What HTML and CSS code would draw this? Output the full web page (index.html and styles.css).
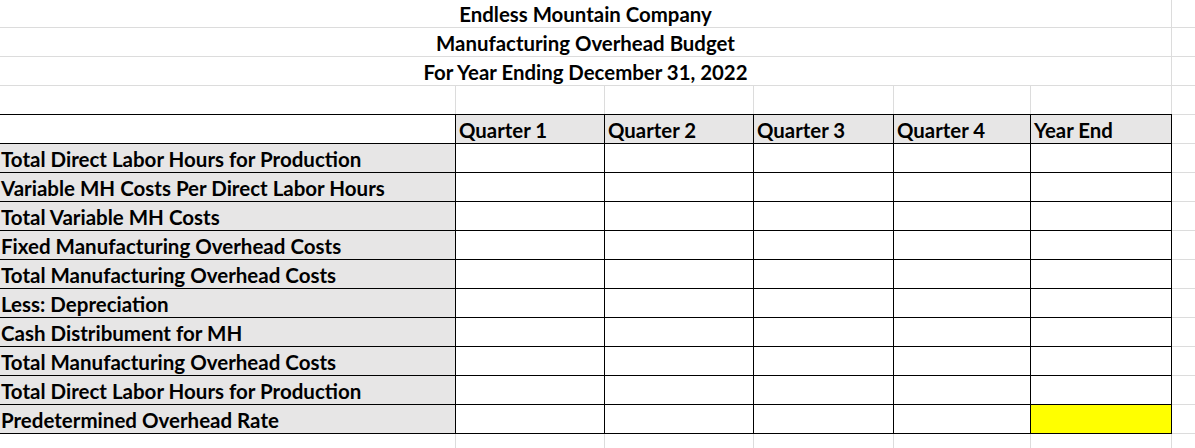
FILE: index.html
```html
<!DOCTYPE html>
<html>
<head>
<meta charset="utf-8">
<link rel="stylesheet" href="styles.css">
</head>
<body>
<div class="sheet">
  <div class="title">Endless Mountain Company</div><div class="c"></div>
  <div class="title">Manufacturing Overhead Budget</div><div class="c"></div>
  <div class="title">For Year Ending December 31, 2022</div><div class="c"></div>
  <div class="c"></div><div class="c"></div><div class="c"></div><div class="c"></div><div class="c"></div><div class="c"></div><div class="c"></div>
  <div class="budget">
    <div class="hd blank"></div>
    <div class="hd">Quarter 1</div>
    <div class="hd">Quarter 2</div>
    <div class="hd">Quarter 3</div>
    <div class="hd">Quarter 4</div>
    <div class="hd">Year End</div>

    <div class="lbl">Total Direct Labor Hours for Production</div><div class="v"></div><div class="v"></div><div class="v"></div><div class="v"></div><div class="v"></div>
    <div class="lbl">Variable MH Costs Per Direct Labor Hours</div><div class="v"></div><div class="v"></div><div class="v"></div><div class="v"></div><div class="v"></div>
    <div class="lbl">Total Variable MH Costs</div><div class="v"></div><div class="v"></div><div class="v"></div><div class="v"></div><div class="v"></div>
    <div class="lbl">Fixed Manufacturing Overhead Costs</div><div class="v"></div><div class="v"></div><div class="v"></div><div class="v"></div><div class="v"></div>
    <div class="lbl">Total Manufacturing Overhead Costs</div><div class="v"></div><div class="v"></div><div class="v"></div><div class="v"></div><div class="v"></div>
    <div class="lbl">Less: Depreciation</div><div class="v"></div><div class="v"></div><div class="v"></div><div class="v"></div><div class="v"></div>
    <div class="lbl">Cash Distribument for MH</div><div class="v"></div><div class="v"></div><div class="v"></div><div class="v"></div><div class="v"></div>
    <div class="lbl">Total Manufacturing Overhead Costs</div><div class="v"></div><div class="v"></div><div class="v"></div><div class="v"></div><div class="v"></div>
    <div class="lbl">Total Direct Labor Hours for Production</div><div class="v"></div><div class="v"></div><div class="v"></div><div class="v"></div><div class="v"></div>
    <div class="lbl">Predetermined Overhead Rate</div><div class="v"></div><div class="v"></div><div class="v"></div><div class="v"></div><div class="v hi"></div>
  </div>
  <div class="c"></div><div class="c"></div><div class="c"></div><div class="c"></div><div class="c"></div><div class="c"></div><div class="c"></div><div class="c"></div><div class="c"></div><div class="c"></div><div class="c"></div>
  <div class="c"></div><div class="c"></div><div class="c"></div><div class="c"></div><div class="c"></div><div class="c"></div><div class="c"></div>
</div>
</body>
</html>
```
FILE: styles.css
```css
html, body {
  margin: 0;
  padding: 0;
  background: #ffffff;
  overflow: hidden;
}
body {
  width: 1195px;
  height: 448px;
  font-family: Lato, "Liberation Sans", sans-serif;
  font-weight: 700;
  color: #000000;
}
.sheet {
  display: grid;
  grid-template-columns: 455px 148px 148px 139px 136px 140px 23px;
  grid-template-rows: 27px repeat(14, 28px) 20px;
  gap: 1px;
  background: #dcdcdc;
  height: 448px;
  overflow: hidden;
}
.c {
  background: #ffffff;
}
.title {
  grid-column: 1 / 7;
  background: #ffffff;
  display: flex;
  align-items: flex-end;
  justify-content: center;
  font-size: 20.4px;
  line-height: 1;
  padding-bottom: 3px;
  white-space: nowrap;
}
.budget {
  grid-column: 1 / 7;
  grid-row: 5 / 16;
  margin: -1px -1px -1px 0;
  padding: 1px 1px 1px 0;
  background: #000000;
  display: grid;
  grid-template-columns: 455px 148px 148px 139px 136px 140px;
  grid-template-rows: repeat(11, 28px);
  gap: 1px;
}
.hd, .lbl, .v {
  display: flex;
  align-items: flex-end;
  line-height: 1;
  white-space: nowrap;
  overflow: hidden;
}
.hd {
  background: #e7e6e6;
  font-size: 20.4px;
  padding: 0 0 3px 3px;
}
.hd.blank {
  background: #ffffff;
}
.lbl {
  background: #e7e6e6;
  font-size: 20.5px;
  padding: 0 0 3px 1px;
}
.v {
  background: #ffffff;
}
.v.hi {
  background: #ffff00;
}
```
